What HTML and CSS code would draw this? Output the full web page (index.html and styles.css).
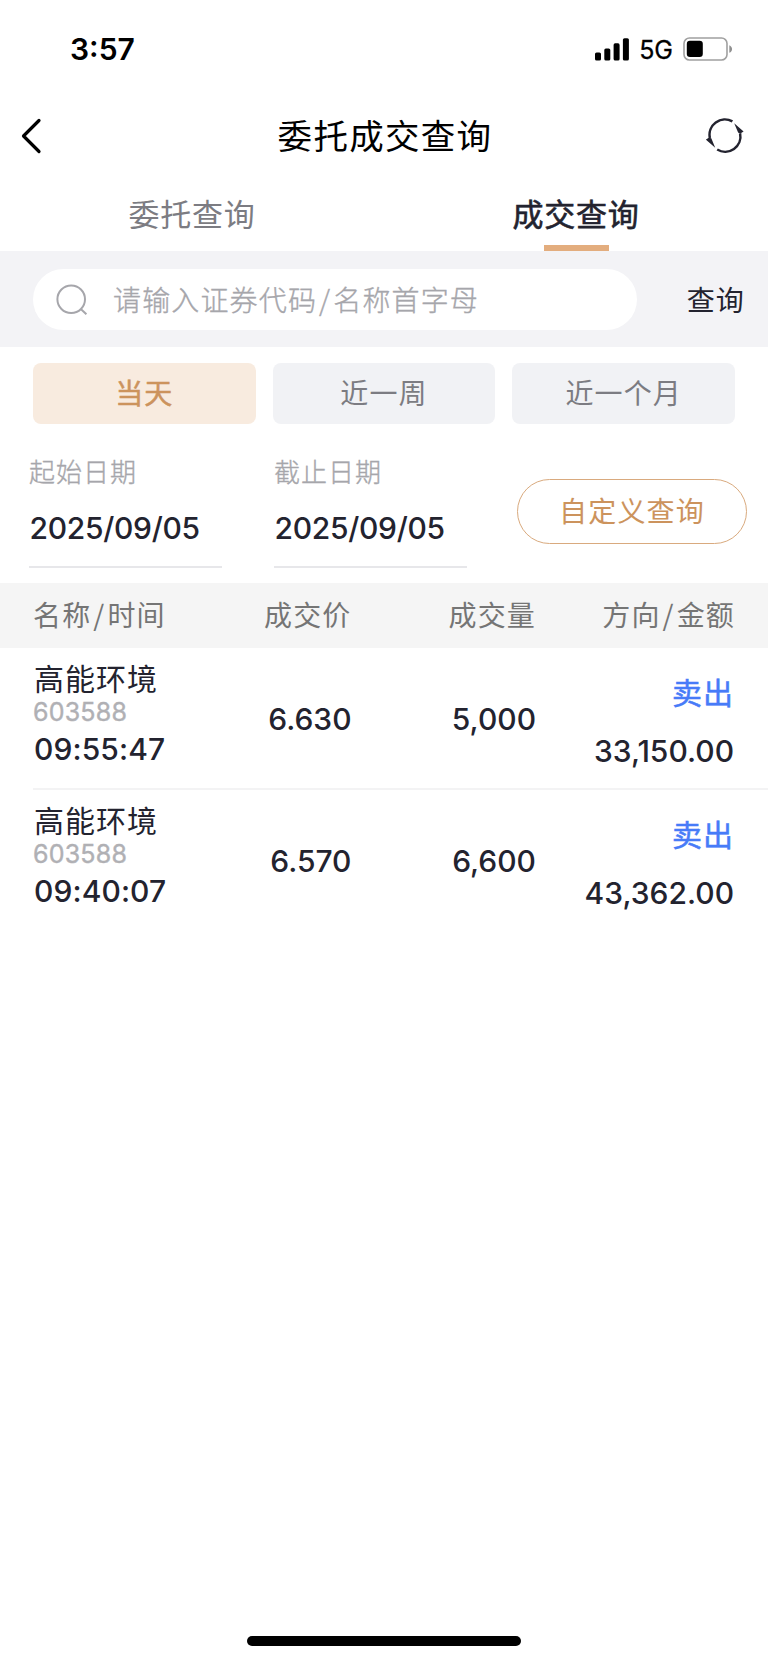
FILE: index.html
```html
<!DOCTYPE html>
<html lang="zh-CN">
<head>
<meta charset="utf-8">
<title>委托成交查询</title>
<link rel="stylesheet" href="styles.css">
</head>
<body>
<div class="screen">
  <div class="status">
    <span class="clock">3:57</span>
    <div class="status-right">
      <svg class="signal" width="34" height="23" viewBox="0 0 34 23"><rect x="0" y="14.5" width="6" height="8" rx="1.6"/><rect x="9.3" y="10.5" width="6" height="12" rx="1.6"/><rect x="18.6" y="5.3" width="6" height="17.2" rx="1.6"/><rect x="27.9" y="0.2" width="6" height="22.3" rx="1.6"/></svg>
      <span class="net">5G</span>
      <svg class="battery" width="50" height="24" viewBox="0 0 50 24"><rect x="1" y="1" width="43" height="22" rx="5.5" fill="none" stroke="#a0a0a0" stroke-width="1.6"/><rect x="3.8" y="3.8" width="16" height="16.2" rx="3.2"/><path d="M46.3 8.2c3.7 1.6 3.7 6 0 7.6z" fill="#909090"/></svg>
    </div>
  </div>
  <header class="nav">
    <svg class="back" width="24" height="40" viewBox="0 0 24 40"><path d="M19 4.5 3.5 20 19 35.5" fill="none" stroke="#000" stroke-width="3.2" stroke-linecap="round" stroke-linejoin="round"/></svg>
    <h1 class="title">委托成交查询</h1>
    <svg class="refresh" width="38" height="36" viewBox="0 0 38 36"><g fill="none" stroke="#23232f" stroke-width="2.5"><path d="M26.4 3.4A15.3 15.3 0 0 0 3.9 20"/><path d="M11.2 31.5A15.3 15.3 0 0 0 34.1 15.3"/></g><path d="M28.2 5.2 37.6 13.4 34.8 15.2 32.2 14.8z M9.2 29.8-.2 21.5 2.8 19.7 5.3 20.2z" fill="#23232f"/></svg>
  </header>
  <nav class="tabs">
    <a class="tab">委托查询</a>
    <a class="tab tab-active">成交查询</a>
  </nav>
  <section class="search">
    <div class="search-box">
      <svg class="glass" width="32" height="32" viewBox="0 0 32 32"><g fill="none" stroke="#a6a6ab" stroke-width="2"><circle cx="15.2" cy="15.2" r="13.8"/><path d="m24.8 25 5.6 5.2"/></g></svg>
      <span class="placeholder">请输入证券代码<span class="slash">/</span>名称首字母</span>
    </div>
    <span class="search-go">查询</span>
  </section>
  <div class="ranges">
    <span class="range range-active">当天</span>
    <span class="range">近一周</span>
    <span class="range">近一个月</span>
  </div>
  <section class="dates">
    <div class="date"><span class="date-label">起始日期</span><span class="date-value">2025/09/05</span></div>
    <div class="date"><span class="date-label">截止日期</span><span class="date-value">2025/09/05</span></div>
    <span class="custom">自定义查询</span>
  </section>
  <div class="grid head">
    <span>名称<span class="slash">/</span>时间</span><span class="r">成交价</span><span class="r">成交量</span><span class="r">方向<span class="slash">/</span>金额</span>
  </div>
  <div class="grid row">
    <div class="stock"><span class="name">高能环境</span><span class="code">603588</span><span class="time">09:55:47</span></div>
    <span class="num">6.630</span><span class="num">5,000</span>
    <div class="deal"><span class="side">卖出</span><span class="amount">33,150.00</span></div>
  </div>
  <div class="divider"></div>
  <div class="grid row">
    <div class="stock"><span class="name">高能环境</span><span class="code">603588</span><span class="time">09:40:07</span></div>
    <span class="num">6.570</span><span class="num">6,600</span>
    <div class="deal"><span class="side">卖出</span><span class="amount">43,362.00</span></div>
  </div>
  <div class="home"></div>
</div>
</body>
</html>
```

FILE: styles.css
```css
* { box-sizing: border-box; }
body { margin: 0; background: #fff; color: #23232f; font-family: "Noto Sans CJK SC", sans-serif; }
svg { display: block; flex: none; }
.screen { width: 768px; height: 1663px; display: flex; flex-direction: column; overflow: hidden; }
.status { height: 98px; display: flex; justify-content: space-between; padding: 0 35px 0 70px; align-items: center; color: #000; font-family: Inter, sans-serif; flex: none; }
.clock { font-size: 30px; font-weight: 600; line-height: 40px; }
.status-right { display: flex; align-items: center; }
.net { font-size: 25px; line-height: 30px; margin: 1px 10px 0 10px; -webkit-text-stroke: 0.3px #000; }
.nav { height: 74px; display: grid; grid-template-columns: 60px 1fr 60px; align-items: center; padding: 1px 24px 0 20px; flex: none; }
.title { margin: 0; padding-left: 6px; text-align: center; font-size: 34.5px; font-weight: 400; letter-spacing: 1.3px; line-height: 50px; padding-bottom: 4px; color: #000; }
.refresh { justify-self: end; }
.tabs { height: 79px; display: flex; flex: none; }
.tab { flex: 1; text-align: center; font-size: 31px; letter-spacing: 0.8px; line-height: 81px; color: #7c7c82; }
.tab-active { color: #23232f; -webkit-text-stroke: 0.6px #23232f; display: flex; flex-direction: column; align-items: center; justify-content: space-between; }
.tab-active::after { content: ""; width: 65px; height: 6px; margin-top: -8px; background: #e3ad7e; flex: none; }
.search { height: 96px; background: #f3f3f6; display: flex; align-items: center; justify-content: space-between; padding: 1px 23px 0 33px; flex: none; }
.search-box { width: 604px; height: 61px; border-radius: 31px; background: #fff; display: flex; align-items: center; padding-left: 23px; }
.placeholder { margin: -2px 0 0 25px; font-size: 28px; font-weight: 300; letter-spacing: 1.15px; line-height: 40px; color: #a6a6ab; -webkit-text-stroke: 0.35px #a6a6ab; }
.slash { padding: 0 2px; }
.search-go { font-size: 28px; letter-spacing: 1.15px; line-height: 40px; margin-top: -2px; }
.ranges { height: 61px; margin: 16px 33px 0; display: flex; gap: 17px; flex: none; }
.range { flex: 1; border-radius: 8px; background: #f1f2f5; color: #7c7c82; font-size: 28px; letter-spacing: 1.15px; line-height: 59px; text-align: center; }
.range-active { background: #f8ebdf; color: #cc935d; -webkit-text-stroke: 0.5px #cc935d; }
.dates { height: 159px; display: flex; padding-left: 29px; flex: none; }
.date { width: 193px; height: 144px; margin-right: 52px; border-bottom: 2px solid #e7e7ea; display: flex; flex-direction: column; padding-top: 27px; }
.date + .date { margin-right: 50px; }
.date-label { font-size: 26px; font-weight: 300; letter-spacing: 1px; line-height: 40px; color: #a6a6ab; -webkit-text-stroke: 0.35px #a6a6ab; }
.date-value { font-family: Inter, sans-serif; font-size: 30px; font-weight: 500; letter-spacing: -0.3px; line-height: 40px; margin: 17px 0 0 0.5px; }
.custom { width: 230px; height: 65px; margin-top: 55px; border: 1.5px solid #d9aa7e; border-radius: 33px; color: #cc935d; font-size: 28px; letter-spacing: 1.15px; line-height: 61px; text-align: center; }
.grid { display: grid; grid-template-columns: 134px 184.5px 184.5px 198px; padding-left: 33px; flex: none; }
.head { height: 65px; background: #f5f5f5; color: #757575; font-size: 28px; letter-spacing: 1.15px; line-height: 63px; white-space: nowrap; }
.r { text-align: right; }
.head .r:last-child { margin-right: -1px; }
.row { height: 140px; }
.divider { height: 2px; margin-left: 33px; background: #f3f3f4; flex: none; }
.stock, .deal { display: flex; flex-direction: column; white-space: nowrap; }
.name { font-size: 30px; letter-spacing: 1px; line-height: 40px; margin: 9px 0 0 1px; }
.code { font-family: Inter, sans-serif; font-size: 25px; letter-spacing: 0.2px; line-height: 26px; margin-top: 2px; color: #b0b0b4; -webkit-text-stroke: 0.4px #b0b0b4; }
.time { font-family: Inter, sans-serif; font-size: 30px; font-weight: 500; letter-spacing: 0.1px; line-height: 40px; margin: 4px 0 0 1px; }
.num { font-family: Inter, sans-serif; font-size: 30px; font-weight: 500; line-height: 40px; margin-top: 51px; text-align: right; }
.deal { text-align: right; }
.side { font-size: 30px; letter-spacing: 1px; line-height: 40px; margin-top: 23px; color: #477bf8; -webkit-text-stroke: 0.5px #477bf8; }
.amount { font-family: Inter, sans-serif; font-size: 30px; font-weight: 500; line-height: 40px; margin-top: 20px; }
.home { width: 274px; height: 10px; border-radius: 5px; background: #000; margin: auto auto 17px; flex: none; }
```
